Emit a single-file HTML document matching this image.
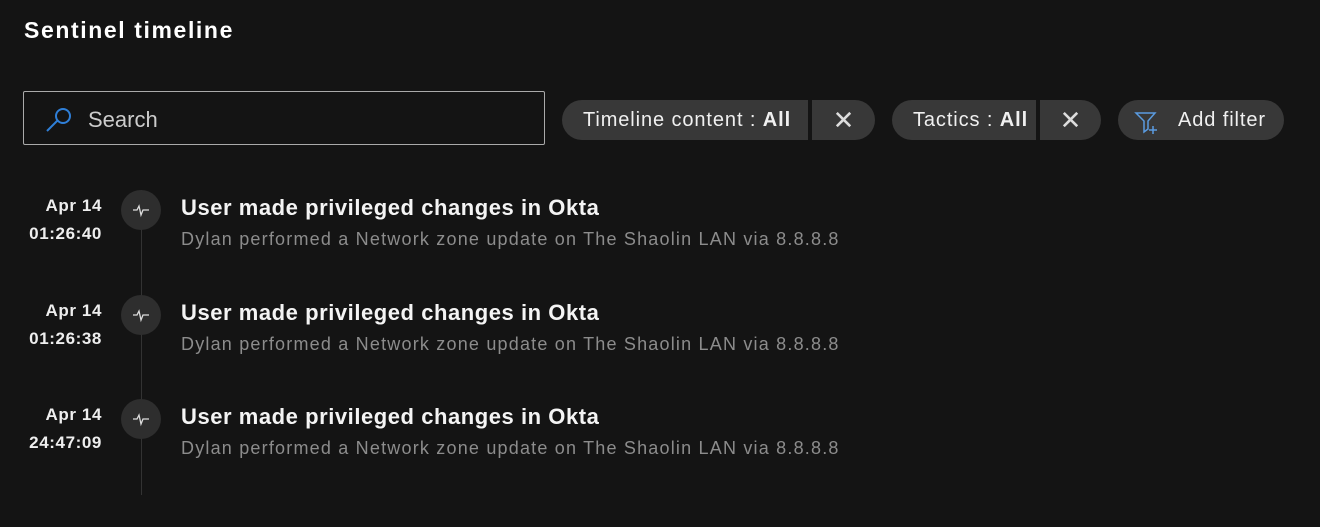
<!DOCTYPE html><html><head><style>
body{margin:0;width:1320px;height:527px;background:#141414;font-family:"Liberation Sans",sans-serif;color:#fff;position:relative;overflow:hidden}
.a{position:absolute;white-space:nowrap}
.pill{position:absolute;top:100px;height:40px;background:#383838;font-size:20px;line-height:40px;color:#f0f0f0;letter-spacing:0.9px}
.x{font-size:26px;text-align:center;font-weight:300;color:#ddd;letter-spacing:0}
.date{position:absolute;right:1218px;text-align:right;font-weight:bold;font-size:17px;line-height:28px;color:#eee;letter-spacing:0.6px}
.circ{position:absolute;left:121px;width:40px;height:40px;border-radius:50%;background:#2e2e2e}
.t{left:181px;font-size:22px;font-weight:bold;color:#f4f4f4;letter-spacing:0.55px}
.s{left:181px;font-size:18px;color:#8c8c8c;letter-spacing:1.2px}
</style></head><body>
<div class="a" style="left:24px;top:17px;font-size:23px;font-weight:bold;letter-spacing:1.6px">Sentinel timeline</div>
<div class="a" style="left:23px;top:91px;width:520px;height:52px;border:1px solid #aaa;border-radius:2px"></div>
<svg class="a" style="left:42px;top:106px" width="34" height="30" viewBox="0 0 34 30"><circle cx="21" cy="10" r="7" fill="none" stroke="#2f7fd8" stroke-width="2"/><line x1="15" y1="15" x2="5" y2="25" stroke="#2f7fd8" stroke-width="2"/></svg>
<div class="a" style="left:88px;top:107px;font-size:22px;color:#ccc">Search</div>
<div class="pill" style="left:562px;width:246px;border-radius:20px 0 0 20px;padding-left:21px;box-sizing:border-box">Timeline content : <b>All</b></div>
<div class="pill x" style="left:812px;width:63px;border-radius:0 20px 20px 0">✕</div>
<div class="pill" style="left:892px;width:144px;border-radius:20px 0 0 20px;padding-left:21px;box-sizing:border-box">Tactics : <b>All</b></div>
<div class="pill x" style="left:1040px;width:61px;border-radius:0 20px 20px 0">✕</div>
<div class="pill" style="left:1118px;width:166px;border-radius:20px;padding-left:60px;box-sizing:border-box">Add filter</div>
<svg class="a" style="left:1134px;top:110px" width="26" height="26" viewBox="0 0 26 26"><path d="M2 3h19l-7 8v8l-4 3v-11z" fill="none" stroke="#5a9be0" stroke-width="1.5"/><path d="M19 16v8M15 20h8" stroke="#5a9be0" stroke-width="1.5"/></svg>
<div class="a" style="left:141px;top:190px;width:1px;height:305px;background:#333"></div>

<div class="date" style="top:192px">Apr 14<br>01:26:40</div>
<div class="circ" style="top:190px"></div>
<div class="a t" style="top:195px">User made privileged changes in Okta</div>
<div class="a s" style="top:229px">Dylan performed a Network zone update on The Shaolin LAN via 8.8.8.8</div>

<div class="date" style="top:297px">Apr 14<br>01:26:38</div>
<div class="circ" style="top:295px"></div>
<div class="a t" style="top:300px">User made privileged changes in Okta</div>
<div class="a s" style="top:334px">Dylan performed a Network zone update on The Shaolin LAN via 8.8.8.8</div>

<div class="date" style="top:401px">Apr 14<br>24:47:09</div>
<div class="circ" style="top:399px"></div>
<div class="a t" style="top:404px">User made privileged changes in Okta</div>
<div class="a s" style="top:438px">Dylan performed a Network zone update on The Shaolin LAN via 8.8.8.8</div>

<svg class="a" style="left:131px;top:200px" width="20" height="230" viewBox="0 0 20 230">
<g fill="none" stroke="#ddd" stroke-width="1.3"><path d="M2 10h4l2-4 2 9 2-5h6"/><path transform="translate(0,105)" d="M2 10h4l2-4 2 9 2-5h6"/><path transform="translate(0,209)" d="M2 10h4l2-4 2 9 2-5h6"/></g></svg>
</body></html>
